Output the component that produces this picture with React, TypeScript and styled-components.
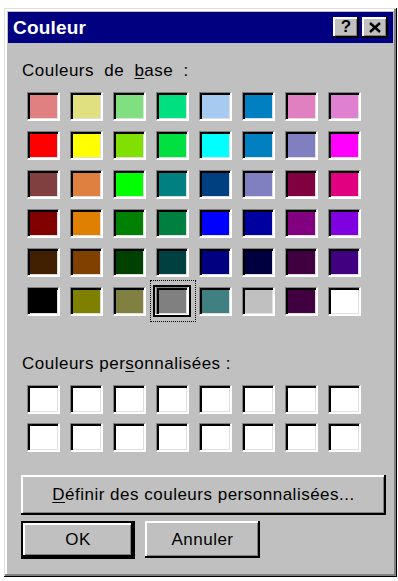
import styled, { createGlobalStyle } from "styled-components";

const GlobalStyle = createGlobalStyle`
  html, body {
    margin: 0;
    padding: 0;
    background: #ffffff;
  }
  body {
    font-family: "Liberation Sans", Arial, sans-serif;
  }
`;

const Window = styled.div`
  box-sizing: border-box;
  margin: 8px 0 0 4px;
  width: 393px;
  height: 569px;
  padding: 4px;
  background: #c0c0c0;
  box-shadow: inset -1px -1px #000, inset 1px 1px #dfdfdf,
    inset -3px -3px #808080, inset 3px 3px #fff;
  display: flex;
  flex-direction: column;
`;

const TitleBar = styled.div`
  height: 31px;
  background: #000080;
  display: flex;
  align-items: center;
  justify-content: space-between;
  padding: 0 5px 0 5px;
`;

const Title = styled.span`
  color: #fff;
  font-weight: bold;
  font-size: 19px;
  letter-spacing: 0.2px;
`;

const TitleButtons = styled.div`
  display: flex;
  gap: 3px;
`;

const TitleButton = styled.div`
  box-sizing: border-box;
  width: 26px;
  height: 21px;
  background: #c0c0c0;
  box-shadow: inset -2px -2px #000, inset 2px 2px #fff,
    inset -3px -3px #808080;
  display: flex;
  align-items: center;
  justify-content: center;
  font-weight: bold;
  font-size: 17px;
  color: #000;
  padding-bottom: 1px;
`;

const Content = styled.div<{ $bottom?: boolean }>`
  display: flex;
  flex-direction: column;
  padding: 0 0 0 14px;
  ${(p) => p.$bottom && "margin-top: auto;"}
`;

const Label = styled.div<{ $top: number; $wordGap?: number }>`
  margin-top: ${(p) => p.$top}px;
  font-size: 17px;
  line-height: 20px;
  letter-spacing: 0.5px;
  word-spacing: ${(p) => p.$wordGap ?? 0}px;
  color: #000;

  u {
    text-decoration-thickness: 1px;
    text-underline-offset: 2px;
  }
`;

const Grid = styled.div<{ $top: number; $rowGap: number }>`
  margin: ${(p) => p.$top}px 0 0 5px;
  display: grid;
  grid-template-columns: repeat(8, 33px);
  grid-auto-rows: 29px;
  column-gap: 10px;
  row-gap: ${(p) => p.$rowGap}px;
`;

const Swatch = styled.div<{ $color: string; $selected?: boolean }>`
  position: relative;
  box-sizing: border-box;
  width: 33px;
  height: 29px;
  background: ${(p) => p.$color};
  border-style: solid;
  border-width: 1px 2px 2px 1px;
  border-color: #808080 #fff #fff #808080;
  box-shadow: inset 2px 2px #000, inset -1px -1px #dfdfdf;

  ${(p) =>
    p.$selected &&
    `
    &::before {
      content: "";
      position: absolute;
      inset: -3px -4px -3px -4px;
      border: 2px solid #000;
      box-shadow: inset -1px -1px #fff;
    }
    &::after {
      content: "";
      position: absolute;
      inset: -8px -9px -8px -7px;
      border: 1px dotted #000;
    }
  `}
`;

const ButtonArea = styled.div`
  display: flex;
  flex-direction: column;
  gap: 6px;
  margin: 0 0 14px -1px;
`;

const Button = styled.div<{ $width: number; $height: number; $default?: boolean }>`
  box-sizing: border-box;
  width: ${(p) => p.$width}px;
  height: ${(p) => p.$height}px;
  display: flex;
  align-items: center;
  justify-content: center;
  font-size: 17px;
  letter-spacing: 0.5px;
  color: #000;
  background: #c0c0c0;
  box-shadow: inset -2px -2px #000, inset 2px 2px #fff, inset -3px -3px #808080;
  ${(p) => p.$default && "border: 2px solid #000;"}

  u {
    text-decoration-thickness: 1px;
    text-underline-offset: 2px;
  }
`;

const ButtonRow = styled.div`
  display: flex;
  align-items: flex-start;
  gap: 10px;
`;

const baseColors = [
  "#e08080", "#e0e080", "#80e080", "#00e080", "#a6caf0", "#0080c0", "#e080c0", "#e080d0",
  "#ff0000", "#ffff00", "#80e000", "#00e040", "#00ffff", "#0080c0", "#8080c0", "#ff00ff",
  "#804040", "#e08040", "#00ff00", "#008080", "#004080", "#8080c0", "#800040", "#e00080",
  "#800000", "#e08000", "#008000", "#008040", "#0000ff", "#0000a0", "#800080", "#8000e0",
  "#402000", "#804000", "#004000", "#004040", "#000080", "#000040", "#400040", "#400080",
  "#000000", "#808000", "#808040", "#808080", "#408080", "#c0c0c0", "#400040", "#ffffff",
];

const SELECTED = 43;

export default function App() {
  return (
    <>
      <GlobalStyle />
      <Window>
        <TitleBar>
          <Title>Couleur</Title>
          <TitleButtons>
            <TitleButton>?</TitleButton>
            <TitleButton>
              <svg width="12" height="11" viewBox="0 0 12 11">
                <path d="M1 1 L11 10 M11 1 L1 10" stroke="#000" strokeWidth="2.4" />
              </svg>
            </TitleButton>
          </TitleButtons>
        </TitleBar>
        <Content>
          <Label $top={18} $wordGap={5}>
            Couleurs de <u>b</u>ase :
          </Label>
          <Grid $top={11} $rowGap={10}>
            {baseColors.map((c, i) => (
              <Swatch key={i} $color={c} $selected={i === SELECTED} />
            ))}
          </Grid>
          <Label $top={38}>
            Couleurs per<u>s</u>onnalisées :
          </Label>
          <Grid $top={11} $rowGap={9}>
            {Array.from({ length: 16 }).map((_, i) => (
              <Swatch key={i} $color="#ffffff" />
            ))}
          </Grid>
        </Content>
        <Content $bottom>
          <ButtonArea>
            <Button $width={365} $height={40}>
              <u>D</u>éfinir des couleurs personnalisées...
            </Button>
            <ButtonRow>
              <Button $width={114} $height={38} $default>
                OK
              </Button>
              <Button $width={115} $height={37}>
                Annuler
              </Button>
            </ButtonRow>
          </ButtonArea>
        </Content>
      </Window>
    </>
  );
}
